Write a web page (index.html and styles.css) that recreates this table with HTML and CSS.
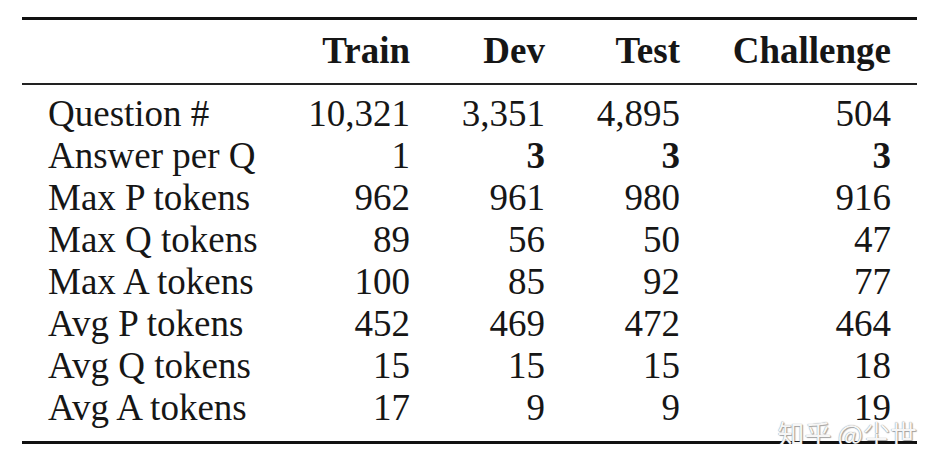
FILE: index.html
```html
<!DOCTYPE html>
<html lang="en">
<head>
<meta charset="utf-8">
<link rel="stylesheet" href="styles.css">
</head>
<body>
<div class="page">
  <div class="table">
    <div class="head grid">
      <div></div>
      <div class="num">Train</div>
      <div class="num">Dev</div>
      <div class="num">Test</div>
      <div class="num">Challenge</div>
    </div>
    <div class="body">
      <div class="grid"><div class="label">Question #</div><div class="num">10,321</div><div class="num">3,351</div><div class="num">4,895</div><div class="num">504</div></div>
      <div class="grid"><div class="label">Answer per Q</div><div class="num">1</div><div class="num b">3</div><div class="num b">3</div><div class="num b">3</div></div>
      <div class="grid"><div class="label">Max P tokens</div><div class="num">962</div><div class="num">961</div><div class="num">980</div><div class="num">916</div></div>
      <div class="grid"><div class="label">Max Q tokens</div><div class="num">89</div><div class="num">56</div><div class="num">50</div><div class="num">47</div></div>
      <div class="grid"><div class="label">Max A tokens</div><div class="num">100</div><div class="num">85</div><div class="num">92</div><div class="num">77</div></div>
      <div class="grid"><div class="label">Avg P tokens</div><div class="num">452</div><div class="num">469</div><div class="num">472</div><div class="num">464</div></div>
      <div class="grid"><div class="label">Avg Q tokens</div><div class="num">15</div><div class="num">15</div><div class="num">15</div><div class="num">18</div></div>
      <div class="grid"><div class="label">Avg A tokens</div><div class="num">17</div><div class="num">9</div><div class="num">9</div><div class="num">19</div></div>
    </div>
    <div class="watermark">知乎 @尘世</div>
  </div>
</div>
</body>
</html>
```
FILE: styles.css
```css
html, body {
  margin: 0;
  padding: 0;
  background: #fff;
}
.page {
  padding-top: 17px;
  padding-left: 22px;
}
.table {
  position: relative;
  width: 895px;
  border-top: 3px solid #111;
  border-bottom: 3px solid #111;
  font-family: "Liberation Serif", "Times New Roman", serif;
  font-size: 37px;
  line-height: 42px;
  color: #161616;
}
.grid {
  display: grid;
  grid-template-columns: 252px 110px 135px 135px 211px;
  padding-left: 26px;
}
.head {
  padding-top: 10px;
  padding-bottom: 11px;
  border-bottom: 2px solid #222;
  font-weight: bold;
}
.body {
  padding-top: 8px;
  padding-bottom: 12px;
}
.num {
  text-align: right;
  white-space: nowrap;
}
.label {
  white-space: nowrap;
}
.b {
  font-weight: bold;
}
.watermark {
  position: absolute;
  right: 0;
  bottom: -8px;
  font-family: "Noto Sans CJK SC", sans-serif;
  font-size: 27px;
  line-height: 30px;
  color: #f6f6f6;
  text-shadow: 0 0 1px #777, 1px 1px 1px rgba(0, 0, 0, 0.35);
  white-space: nowrap;
}
```
